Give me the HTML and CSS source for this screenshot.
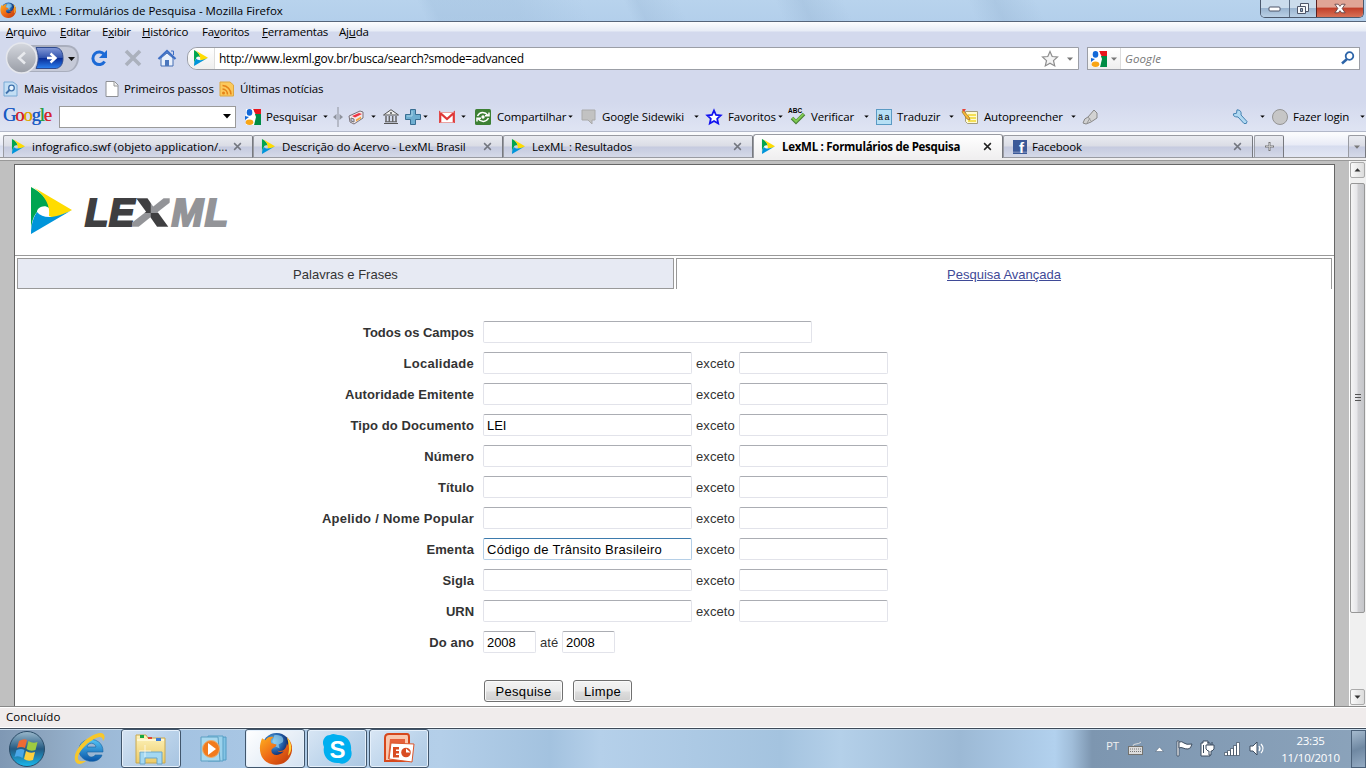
FILE: index.html
```html
<!DOCTYPE html>
<html lang="pt-BR">
<head>
<meta charset="utf-8">
<title>LexML : Formulários de Pesquisa</title>
<link rel="stylesheet" href="styles.css">
</head>
<body>
<svg class="defs" width="0" height="0">
  <defs>
    <linearGradient id="orb" x2="0" y2="1"><stop stop-color="#9bb9cc"/><stop offset=".5" stop-color="#245a82"/><stop offset="1" stop-color="#19b9ee"/></linearGradient>
    <linearGradient id="fwd" x2="0" y2="1"><stop stop-color="#8399d8"/><stop offset=".48" stop-color="#3355ae"/><stop offset=".5" stop-color="#082a94"/><stop offset="1" stop-color="#2b80f0"/></linearGradient>
    <linearGradient id="back" x2="0" y2="1"><stop stop-color="#d5d8df"/><stop offset="1" stop-color="#999da6"/></linearGradient>
    <linearGradient id="folder" x2="0" y2="1"><stop stop-color="#fdf3bd"/><stop offset="1" stop-color="#edcb66"/></linearGradient>
    <radialGradient id="globe" cx=".4" cy=".3"><stop stop-color="#7cc7ee"/><stop offset=".6" stop-color="#2565ae"/><stop offset="1" stop-color="#132d6d"/></radialGradient>
    <linearGradient id="fox" x2="1" y2="1"><stop stop-color="#ffb01f"/><stop offset=".5" stop-color="#ed6716"/><stop offset="1" stop-color="#b8340b"/></linearGradient>
    <linearGradient id="ie" x2="0" y2="1"><stop stop-color="#55c5f5"/><stop offset="1" stop-color="#0754a8"/></linearGradient>
    <symbol id="lex" viewBox="0 0 41 47">
      <path fill="#00a550" d="M0 0C12 6 18 15 18 21C13 17 6 21 6 25C1 31 0 39 0 47Z"/>
      <path fill="#ffdc00" d="M2 0L41 23L27 30C23 31 20 30 18 29C19 23 18 11 2 0Z"/>
      <path fill="#0095da" d="M0 47C0 37 3 29 6 25C12 32 24 32 41 23Z"/>
    </symbol>
    <symbol id="firefox" viewBox="0 0 32 32">
      <circle cx="17" cy="15" r="14" fill="url(#globe)"/>
      <path fill="#9bd6ef" d="M15 3c7-1 10 3 8 7l-4 2 1 4-4-2-3-5z" opacity=".65"/>
      <path fill="url(#fox)" d="M3 6L6 8C8 5 11 4 14 5C11 7 11 9 12 11L17 12C17 15 12 15 12 18C12 23 19 24 24 19C20 20 18 19 18 18C23 20 27 16 27 11L28 13C29 9 28 7 27 5C32 9 34 17 30 24C25 34 10 34 4 26C0 20 0 13 3 6Z"/>
      <path fill="#ffd23b" d="M27 5C32 10 33 18 28 23C30 16 29 11 27 5Z"/>
    </symbol>
    <symbol id="goog" viewBox="0 0 16 16">
      <path fill="#e9161d" d="M8 0h8v6h-5z"/><path fill="#008c45" d="M10 5h6v11H9z"/>
      <path fill="#fff" d="M1 0h7l3 8-2 8H1z"/>
      <ellipse cx="4.500" cy="3.400" rx="2.800" ry="3.300" fill="#1268d8"/><ellipse cx="4.500" cy="13.200" rx="3.800" ry="2.700" fill="#f8a516"/><path fill="#1268d8" d="M0 7l4 1-4 3z"/><path fill="#e9161d" d="M9 0h4l-3 4z"/>
    </symbol>
    <symbol id="x" viewBox="0 0 8 8"><path d="M1 1l6 6M7 1L1 7" fill="none" stroke="currentColor" stroke-width="1.300"/></symbol>
    <symbol id="dn" viewBox="0 0 6 4"><path d="M0 .5h6L3 3.800z" fill="currentColor"/></symbol>
  </defs>
</svg>

<header class="titlebar">
  <svg class="i16"><use href="#firefox"/></svg>
  <span class="wintitle">LexML : Formulários de Pesquisa - Mozilla Firefox</span>
  <div class="winctl">
    <span class="wc"><svg width="14" height="6"><rect x="1" y="1" width="11" height="4" rx="1" fill="#fff" stroke="#4d5568"/></svg></span>
    <span class="wc mid"><svg width="14" height="14"><g fill="#f5f7fa" stroke="#4d5568"><path d="M4.500 1.500h8v8h-8z"/><path d="M1.500 4.500h8v7h-8z"/><path fill="#8ea9c4" d="M4.500 6.500h2v3h-2z"/></g></svg></span>
    <span class="wc close"><svg width="12" height="11" viewBox="0 0 14 12"><path d="M1 1h4l2 2.500L9 1h4L9.500 6 13 11H9L7 8.500 5 11H1l3.500-5z" fill="#fff" stroke="#5d4044"/></svg></span>
  </div>
</header>

<nav class="menu">
  <span><u>A</u>rquivo</span><span><u>E</u>ditar</span><span>E<u>x</u>ibir</span><span><u>H</u>istórico</span><span>Fa<u>v</u>oritos</span><span><u>F</u>erramentas</span><span>Aj<u>u</u>da</span>
</nav>

<div class="navbar">
  <svg class="nb" width="187" height="32" viewBox="0 0 187 32">
    <path d="M14 1H66C75 1 79 7 79 13.500S75 28 66 28H14Z" fill="#a9aebd"/>
    <path d="M14 3H66C74 3 77 8 77 13.500S74 27 66 27H14Z" fill="#c6cad8"/>
    <path d="M36 3.500h19c6 0 8 5 8 11s-3 10-8 10H36c3-7 3-14 0-21z" fill="url(#fwd)" stroke="#2f4a8d"/>
    <circle cx="21.500" cy="14" r="15" fill="url(#back)" stroke="#e5e7ed" stroke-width="1.500"/>
    <path d="M25 8.500l-6 5.500 6 5.500" fill="none" stroke="#e8eaee" stroke-width="2.600"/>
    <path d="M47 14h8M50.500 9.500l5 4.500-5 4.500" fill="none" stroke="#fff" stroke-width="2.400"/>
    <path d="M68 13h7l-3.500 4z" fill="#111"/>
    <path d="M104.300 10.600A6.300 6.300 0 1 0 104.600 17.500" fill="none" stroke="#1c6ad6" stroke-width="3"/><path d="M107 6v8h-8z" fill="#1c6ad6"/>
    <path d="M126 7l14 14M140 7l-14 14" stroke="#abb1bd" stroke-width="3.600"/>
    <path d="M161 14v8h12v-8l-6-5z" fill="#e9f0fb" stroke="#456fb4"/><path d="M158.500 15L167 7l8.500 8" fill="none" stroke="#3e6fc4" stroke-width="2.200"/><path d="M171 7h2.500v4" stroke="#3e6fc4" fill="none"/><path d="M165 16h4v6h-4z" fill="#4c77bd"/>
  </svg>
  <div class="url">
    <span class="ident"><svg width="14" height="16"><use href="#lex"/></svg></span>
    <span class="addr">http://www.lexml.gov.br/busca/search?smode=advanced</span>
    <svg width="18" height="18" viewBox="0 0 18 18"><path d="M9 1.500l2.200 5 5.300.5-4 3.600 1.200 5.300L9 13.200l-4.700 2.700 1.200-5.300-4-3.600 5.300-.5z" fill="#f4f4f4" stroke="#8d8d8d" stroke-width="1.200"/></svg>
    <svg class="dn gray"><use href="#dn"/></svg>
  </div>
  <div class="search">
    <span class="engine"><svg width="16" height="16"><use href="#goog"/></svg><svg class="dn gray"><use href="#dn"/></svg></span>
    <em>Google</em>
    <svg width="14" height="14" viewBox="0 0 14 14"><circle cx="8.500" cy="5" r="3.800" fill="none" stroke="#2c64a8" stroke-width="1.800"/><path d="M6 8l-5 4.500" stroke="#2c64a8" stroke-width="2.500"/></svg>
  </div>
</div>

<div class="bookmarks">
  <svg class="i16" viewBox="0 0 16 16"><path d="M1 1h9l4 3v11H1z" fill="#c3def4" stroke="#79aad5"/><circle cx="8.500" cy="7" r="2.800" fill="#e8f4fd" stroke="#3f71ac" stroke-width="1.300"/><path d="M6.500 9L3 12.500" stroke="#3f71ac" stroke-width="1.800"/></svg><span>Mais visitados</span>
  <svg class="i16" viewBox="0 0 16 16"><path d="M2 .5h8.500L14 4v11.500H2z" fill="#fff" stroke="#8e9095"/><path d="M10 .5V5h4" fill="#eee" stroke="#9a9a9a"/></svg><span>Primeiros passos</span>
  <svg class="i16" viewBox="0 0 16 16"><path d="M1 1h10l3.500 3v11H1z" fill="#fbc95c" stroke="#dda640"/><circle cx="4.500" cy="12" r="1.500" fill="#e58318"/><path d="M3.500 8a5.500 5.500 0 0 1 5 5.500M3.500 4.500a9 9 0 0 1 8.500 9" fill="none" stroke="#e58318" stroke-width="1.600"/></svg><span>Últimas notícias</span>
</div>

<div class="gbar">
  <b class="glogo"><i class="cb">G</i><i class="cr">o</i><i class="cy">o</i><i class="cb">g</i><i class="cg">l</i><i class="cr">e</i></b>
  <div class="combo"><svg width="8" height="5"><path d="M0 0h8L4 4.500z"/></svg></div>
  <svg class="i16"><use href="#goog"/></svg><span>Pesquisar</span><svg class="dn"><use href="#dn"/></svg>
  <svg width="10" height="20" viewBox="0 0 10 20"><path d="M5 0v20" stroke="#8f939d"/><path d="M3.500 7v6L0 10zM6.500 7v6L10 10z" fill="#8f939d"/></svg>
  <svg class="i16" viewBox="0 0 16 16"><path d="M1 7l11-5 3 1v6L6 15l-4-2z" fill="#f3e8e8" stroke="#78717a"/><path d="M4 7l7-3 3 1-7 3.500z" fill="#ee3443"/><path d="M8 10.500l5-3v2l-5 3z" fill="#f6a53b"/><path d="M3 9l3 1v3l-3-1z" fill="#c4c7e6" stroke="#777"/></svg><svg class="dn"><use href="#dn"/></svg>
  <svg class="i16" viewBox="0 0 16 16"><path d="M.5 6L8 .7 15.500 6zM1 14.500h14M2 12.800h12" fill="#eee" stroke="#555"/><path d="M3 7v6M6.300 7v6M9.700 7v6M13 7v6" stroke="#666" stroke-width="1.500"/><circle cx="8" cy="4" r="1" fill="#555"/></svg>
  <svg class="i16" viewBox="0 0 16 16"><path d="M5.500 .5h5v5h5v5h-5v5h-5v-5h-5v-5h5z" fill="#6faed0" stroke="#386e93"/><path d="M7 2v5H2" stroke="#a8d3e7" fill="none"/></svg><svg class="dn"><use href="#dn"/></svg>
  <svg class="i16" viewBox="0 0 16 16"><path d="M0 3h16v11H0z" fill="#fff"/><path d="M1.200 14V4L8 10l6.800-6v10" fill="none" stroke="#df3737" stroke-width="2.200"/><path d="M1 3.500h14M1 13.500h14" stroke="#e38a8a" stroke-width=".8"/></svg><svg class="dn"><use href="#dn"/></svg>
  <svg class="i16" viewBox="0 0 16 16"><rect width="16" height="16" rx="1.500" fill="#3d8034"/><path d="M2.500 7C5 2.500 10 2.500 13 6.500M10 6.800h4V3.500M13.500 9C11 13.500 6 13.500 3 9.500M6 9.200H2v3.300" fill="none" stroke="#fff" stroke-width="1.500"/><circle cx="8" cy="8" r="1.700" fill="#fff"/></svg><span>Compartilhar</span><svg class="dn"><use href="#dn"/></svg>
  <svg class="i16" viewBox="0 0 16 16"><path d="M1 1h13v10h-3v4l-4-4H1z" fill="#c2c2c2" stroke="#aaa"/></svg><span>Google Sidewiki</span><svg class="dn"><use href="#dn"/></svg>
  <svg class="i16" viewBox="0 0 16 16"><path d="M8 1.500l2 4.500 4.700.5-3.500 3.200 1 4.800L8 12l-4.200 2.500 1-4.800L1.300 6.500 6 6z" fill="#fff" stroke="#1111f0" stroke-width="1.800"/></svg><span>Favoritos</span><svg class="dn"><use href="#dn"/></svg>
  <svg class="i16 abc" viewBox="0 0 16 16"><text x="-1" y="4" textLength="14">ABC</text><path d="M3 9l4 4 8-8" fill="none" stroke="#477f35" stroke-width="3.600"/><path d="M3.500 9L7 12.500 14.500 5" fill="none" stroke="#7fca52" stroke-width="2"/></svg><span>Verificar</span><svg class="dn"><use href="#dn"/></svg>
  <svg class="i16 aa" viewBox="0 0 16 16"><rect x=".5" y=".5" width="15" height="15" fill="#b6e0f5" stroke="#5a9ac4"/><text x="2" y="11">ä</text><text x="8.500" y="11">a</text></svg><span>Traduzir</span><svg class="dn"><use href="#dn"/></svg>
  <svg class="i16" viewBox="0 0 16 16"><path d="M3.500 2.500h12v12h-10l-2-2z" fill="#fffbd1" stroke="#a49d7c"/><path d="M6 6h8M6 9h8M6 12h8" stroke="#efd62d" stroke-width="1.700"/><path d="M1 1l6 7 1 3-3-1-5-7z" fill="#f9bb33" stroke="#986c25" stroke-width=".7"/><path d="M0 0h4L2 3z" fill="#e64336"/></svg><span>Autopreencher</span><svg class="dn"><use href="#dn"/></svg>
  <svg class="i16" viewBox="0 0 16 16"><path d="M1 14q1-5 5-6l6-7 3 3v5l-6 4-5 2z" fill="#d2d2d2" stroke="#888"/><path d="M6 8l3 4M5 14l3-5" stroke="#999"/></svg>
  <svg class="i16" viewBox="0 0 16 16"><path d="M5 .8l-.5 3.500-3 .5Q.5 8 6 8l6 6.500q3 1 3-2L9 6Q10 1 5 .8z" fill="#b1d8f1" stroke="#4382b1"/></svg><svg class="dn"><use href="#dn"/></svg>
  <svg class="i16" viewBox="0 0 16 16"><circle cx="8" cy="8" r="7.500" fill="#c6c6c6" stroke="#949494"/></svg><span>Fazer login</span><svg class="dn"><use href="#dn"/></svg>
</div>

<div class="tabs">
  <div class="tab"><svg class="fav"><use href="#lex"/></svg><span class="t1">infografico.swf (objeto application/...</span><svg class="cx"><use href="#x"/></svg></div>
  <div class="tab"><svg class="fav"><use href="#lex"/></svg><span class="t2">Descrição do Acervo - LexML Brasil</span><svg class="cx"><use href="#x"/></svg></div>
  <div class="tab"><svg class="fav"><use href="#lex"/></svg><span class="t3">LexML : Resultados</span><svg class="cx"><use href="#x"/></svg></div>
  <div class="tab active"><svg class="fav"><use href="#lex"/></svg><span class="t4">LexML : Formulários de Pesquisa</span><svg class="cx"><use href="#x"/></svg></div>
  <div class="tab book"><svg class="fav" viewBox="0 0 14 14"><path fill="#3b5998" d="M0 0h14v14H0z"/><path fill="#7185b5" d="M0 11.500h14V13H0z"/><text class="fb" x="6" y="13">f</text></svg><span class="t3">Facebook</span><svg class="cx"><use href="#x"/></svg></div>
  <div class="tab plus"><svg width="9" height="9"><path d="M4.500 0v9M0 4.500h9" stroke="#777" stroke-width="2"/><path d="M4.500 1v7M1 4.500h7" stroke="#ccc" stroke-width=".8"/></svg></div>
  <div class="tab all"><svg class="dn gray"><use href="#dn"/></svg></div>
</div>

<div class="view">
  <main class="page">
    <div class="brand">
      <svg width="41" height="47"><use href="#lex"/></svg>
      <div class="word"><span class="dk">LE</span><span class="xx">X</span><span class="lt">ML</span></div>
    </div>
    <div class="ptabs"><div class="pt">Palavras e Frases</div><div class="pt on"><a>Pesquisa Avançada</a></div></div>
    <form class="form">
      <label class="tight">Todos os Campos</label><div><span class="in w329"></span></div>
      <label class="loose">Localidade</label><div><span class="in w209"></span><span class="ex">exceto</span><span class="in w149"></span></div>
      <label>Autoridade Emitente</label><div><span class="in w209"></span><span class="ex">exceto</span><span class="in w149"></span></div>
      <label>Tipo do Documento</label><div><span class="in w209 lei">LEI</span><span class="ex">exceto</span><span class="in w149"></span></div>
      <label>Número</label><div><span class="in w209"></span><span class="ex">exceto</span><span class="in w149"></span></div>
      <label>Título</label><div><span class="in w209"></span><span class="ex">exceto</span><span class="in w149"></span></div>
      <label class="loose">Apelido / Nome Popular</label><div><span class="in w209"></span><span class="ex">exceto</span><span class="in w149"></span></div>
      <label>Ementa</label><div><span class="in w209 focus">Código de Trânsito Brasileiro</span><span class="ex">exceto</span><span class="in w149"></span></div>
      <label>Sigla</label><div><span class="in w209"></span><span class="ex">exceto</span><span class="in w149"></span></div>
      <label class="tight">URN</label><div><span class="in w209"></span><span class="ex">exceto</span><span class="in w149"></span></div>
      <label>Do ano</label><div><span class="in w53">2008</span><span class="ate">até</span><span class="in w53">2008</span></div>
    </form>
    <div class="btns"><span class="btn b1">Pesquise</span><span class="btn b2">Limpe</span></div>
  </main>
  <div class="sb">
    <div class="sbb"><svg class="dn up"><use href="#dn"/></svg></div>
    <div class="thumb"><svg width="6" height="8"><path d="M0 .5h6M0 3.500h6M0 6.500h6" stroke="#555"/></svg></div>
    <div class="sbb"><svg class="dn"><use href="#dn"/></svg></div>
  </div>
</div>
<div class="status">Concluído</div>

<footer class="taskbar">
  <div class="app start"><svg width="38" height="38" viewBox="0 0 38 38"><circle cx="19" cy="19" r="17.500" fill="url(#orb)" stroke="#2b4c68"/><path d="M11 11q5-3 8-1l-2 8q-4-2-8 0z" fill="#ef6a34"/><path d="M20.500 11q4 3 9 1l-2 8q-5 2-9-1z" fill="#9fcb41"/><path d="M8.500 20q5-2 8 0l-2 8q-4-3-8-1z" fill="#4aa7e8"/><path d="M18 21q4 3 9 1l-2 8q-5 2-9-1z" fill="#fdd03e"/></svg></div>
  <div class="app ie"><svg width="34" height="34" viewBox="0 0 34 34"><path d="M31 20H15C15 26 22 26 23 23H30C27 33 7 31 7 18C7 3 32 4 31 20ZM15 15H24C23 10 16 10 15 15Z" fill="url(#ie)" fill-rule="evenodd" stroke="#17639f" stroke-width=".6"/><path d="M14 29C9 33 4 33 3 28C1 20 12 6 24 2C31 -1 35 3 31 9C31 4 27 4 22 7C12 13 5 22 6 27C7 30 11 29 14 29Z" fill="#f7c72b"/></svg></div>
  <div class="app open"><svg width="34" height="32" viewBox="0 0 34 32"><path d="M2 2h10l2 3h17v25H2z" fill="url(#folder)" stroke="#c9a84e"/><path d="M3 7h27" stroke="#fffbe1" stroke-width="1.500"/><path d="M6 2h4v3H6z" fill="#18a83f"/><path d="M14 4h4v2h-4z" fill="#df4837"/><path d="M22 5h5v3h-5z" fill="#3b7bd7"/><path d="M6 31V19h22v12h-5v-6H11v6z" fill="#a4d8f2" stroke="#6ba5c8"/><path d="M11 12v12M5 18h12" stroke="#fff" opacity=".7"/></svg></div>
  <div class="app"><svg width="32" height="30" viewBox="0 0 32 30"><path d="M14 4l14-1v23H14z" fill="#82c4e5" stroke="#529dc5"/><path d="M10 2h15v25H10z" fill="#9bd2ec" stroke="#58a0c6"/><path d="M3 3h17l2 24H3z" fill="#a9d9ef" stroke="#5d9fc2"/><circle cx="13" cy="15" r="8.500" fill="#f27b1d" stroke="#e7ae72"/><path d="M10 9v12l8-6z" fill="#fff"/></svg></div>
  <div class="app open ff"><svg width="33" height="33"><use href="#firefox"/></svg></div>
  <div class="app open"><svg width="32" height="32" viewBox="0 0 32 32"><path d="M9 2C13 0 15 2 17 2C26 2 31 9 30 17C33 25 25 33 18 30C8 31 1 23 3 14C0 8 4 2 9 2Z" fill="#00aff0"/><text class="sk" x="16.500" y="24.500">S</text></svg></div>
  <div class="app open"><svg width="34" height="32" viewBox="0 0 34 32"><path d="M7 1h18q2 0 2 3v24H3V5q0-4 4-4z" fill="#f9c7ae" stroke="#d6471c" stroke-width="2"/><path d="M8 6h15v20H6z" fill="#e6603a"/><path d="M9 10l23 1-2 18-23-3z" fill="#fff" stroke="#db562c"/><path d="M11 14h6v2.500h-3V18h3v2.500h-3V22h3v2.500h-6z" fill="#d84c22"/><circle cx="24" cy="19.500" r="4.800" fill="#d84c22"/><path d="M24 19.500v-4l4.500 4z" fill="#fff"/></svg></div>
  <div class="tray">
    <span class="pt-lang">PT</span>
    <svg width="16" height="14" viewBox="0 0 16 14"><path d="M5 4q0-2 3-2t5-2" fill="none" stroke="#ddd"/><rect x=".5" y="4.500" width="14" height="8" fill="#ddd" stroke="#74736f"/><path d="M2 7h11M2 9.500h11" stroke="#777" stroke-dasharray="1 1"/></svg>
    <svg width="9" height="6"><path d="M.5 5.500h8L4.500 1z" fill="#fff" stroke="#596b80" stroke-width=".6"/></svg>
    <svg width="17" height="17" viewBox="0 0 17 17"><path d="M1 1h2v15H1z" fill="#fff" stroke="#3d4d60" stroke-width=".8"/><path d="M3 2q3-1 5 1t8 1q-1 5-4 5T7 8 3 8z" fill="#fff" stroke="#3d4d60"/></svg>
    <svg width="15" height="17" viewBox="0 0 15 17"><path d="M1 3h2V1h5v2h2v13H1z" fill="#fff" stroke="#3d4d60"/><path d="M3.500 5v8" stroke="#3d4d60"/><path d="M6 5h8v4l-2 2h-1v4H9v-4H8L6 9zM8 2v3M12 2v3" fill="#fff" stroke="#3d4d60"/></svg>
    <svg width="17" height="14" viewBox="0 0 17 14"><g fill="#fff" stroke="#3d4d60" stroke-width=".7"><path d="M.5 10.500h3v3h-3zM3.500 8.500h3v5h-3zM6.500 6.500h3v7h-3zM9.500 3.500h3v10h-3zM12.500.5h3v13h-3z"/></g></svg>
    <svg width="16" height="15" viewBox="0 0 16 15"><path d="M1 5h3l4-4v13l-4-4H1z" fill="#fff" stroke="#3d4d60"/><path d="M10 5q2 2.500 0 5M12 3q4 4.500 0 9" fill="none" stroke="#fff" stroke-width="1.200"/></svg>
    <div class="clock"><span>23:35</span><span>11/10/2010</span></div>
    <div class="peek"></div>
  </div>
</footer>
</body>
</html>
```
FILE: styles.css
```css
*{box-sizing:border-box}
body{margin:0;width:1366px;height:768px;overflow:hidden;display:flex;flex-direction:column;background:#d3d9ed;color:#000;font:11.5px/16px "Open Sans","Noto Sans",sans-serif;letter-spacing:-.2px;white-space:nowrap}
svg{display:block;flex:none;overflow:visible}
body>*{flex:none}
.defs{position:absolute}
.i16{width:16px;height:16px}
.dn{width:5px;height:3px}
.gray{color:#777;width:6px;height:4px}

.titlebar{height:22px;display:flex;align-items:flex-start;border-bottom:1px solid #56657a;background:linear-gradient(65deg,transparent 0 31%,#9dbcda55 32% 38%,transparent 43% 46%,#94b2d044 47%,transparent 50% 57%,#94b2d055 59%,transparent 62% 71%,#94b2d055 73%,transparent 76%),linear-gradient(#b8d3ed,#b3cfeb);padding-top:2px}
.wintitle{margin:1px auto 0 5px;letter-spacing:-.02px}
.winctl{display:flex;height:18px;margin:-2px 2px 0 0;border:1px solid #4b586c;border-top:0;border-radius:0 0 5px 5px;overflow:hidden}
.wc{width:28px;display:flex;align-items:center;justify-content:center;background:linear-gradient(#cbdcec 45%,#9bb5d0 50%,#b9cfe5)}
.wc.mid{width:27px;border-left:1px solid #5b6c82}
.wc.close{width:47px;border-left:1px solid #5b2020;background:linear-gradient(#e0a596 40%,#c2412c 50%,#d87156)}
.menu{height:22px;display:grid;grid-template-columns:54px 42px 40px 60px 60px 77px 60px;padding:2px 0 0 6px;background:linear-gradient(#fdfdfe,#e7ecf6 9px,#d3d9ed 10px)}
.navbar{height:30px;display:flex;padding-top:3px;align-items:flex-start}
.nb{margin-top:-3px}
.url{width:892px;height:23px;border:1px solid #9b9ea6;border-radius:10px 0 0 10px;background:#fff;display:flex;align-items:center;padding-right:5px;font-size:12px;letter-spacing:-.25px}
.ident{width:27px;height:21px;border-right:1px solid #ddd;background:linear-gradient(#fff,#eee);border-radius:10px 0 0 10px;padding:2px 0 0 6px}
.addr{flex:1;margin-left:4px}
.url .gray{margin-left:8px}
.search{width:273px;height:23px;margin-left:8px;border:1px solid #9b9ea6;background:#fff;display:flex;align-items:center}
.engine{width:33px;height:21px;display:flex;align-items:center;gap:4px;padding-left:3px;border-right:1px solid #ddd;background:linear-gradient(#fff,#eee)}
.search em{flex:1;margin-left:4px;color:#777;letter-spacing:.1px}
.search>svg{margin-right:4px;margin-top:-2px}
.bookmarks{height:28px;display:grid;grid-template-columns:21px 80px 20px 95px 21px 120px;align-items:center;padding:1px 0 0 3px;letter-spacing:-.1px}
.gbar{height:30px;display:grid;grid-template-columns:56px 186px 21px 57px 10px 15px 23px 12px 22px 18px 16px 22px 14px 22px 71px 13px 21px 92px 12px 22px 50px 11px 22px 53px 12px 21px 52px 13px 22px 87px 11px 150px 28px 12px 21px 67px 6px;align-items:center;padding-left:3px;border-bottom:1px solid #b2b8c9;background:linear-gradient(#d3d9ed,#dfe4f3);letter-spacing:-.15px}
.combo{width:177px;height:22px;border:1px solid #9a9a9a;background:#fff;display:flex;align-items:center;justify-content:flex-end;padding-right:4px}
.glogo{font:18.5px/22px "Liberation Serif",serif;letter-spacing:-1.1px;margin-top:-4px}
.glogo i{font-style:normal;text-shadow:.3px 0 currentColor}
.cb{color:#1b5bc4}.cr{color:#d3252f}.cy{color:#dfa900}.cg{color:#2a9e45}
.abc text{font:bold 6.5px "Liberation Sans",sans-serif}
.aa text{font:9px "Liberation Sans",sans-serif}

.tabs{height:29px;display:flex;align-items:flex-start;padding:3px 0 0 3px;background:linear-gradient(#fafbfd 2px,#e8ebf6 13px,#d6dcee 14px,#e3e7f4 25px,#999 25px 26px,#f0eff0 26px 28px,#999 28px)}
.tab{width:250px;height:23px;display:flex;align-items:center;border:1px solid #999ba2;border-right-color:#77797f;border-radius:2px 2px 0 0;padding:0 10px 0 7px;background:linear-gradient(#e9ebf1,#dadce5 10px,#c5cadf 11px,#d5d9e8)}
.tab span{margin-left:6px;flex:1}
.tab.book{padding-left:9px}
.tab.book span{margin-left:5px}
.t1{letter-spacing:.02px}.t2{letter-spacing:-.07px}.t3{letter-spacing:-.15px}.t4{letter-spacing:-.28px}
.fav{width:15px;height:15px}
.book .fav{width:14px;height:14px}
.fb{font:bold 15px "Liberation Sans",sans-serif;fill:#fff}
.cx{width:9px;height:9px;color:#737780}
.tab.active{height:24px;margin-top:-1px;background:linear-gradient(#fff,#f0eff0);font-weight:bold;border-bottom:0;border-radius:3px 3px 0 0}
.active .cx{color:#222}
.tab.plus{width:30px;margin-left:1px;padding:0;justify-content:center}
.tab.all{width:18px;padding:0;justify-content:center;margin-left:auto}

.view{height:546px;display:flex;background:#c0c0c0;padding-left:14px;border-bottom:1px solid #888}
.page{width:1321px;margin-top:3px;height:542px;background:#fff;border:1px solid #666;border-bottom:0;overflow:hidden;color:#333;font:13px/16px "Liberation Sans",Arial,sans-serif;letter-spacing:.1px}
.brand{height:91px;border-bottom:1px solid #999;display:flex;align-items:flex-start;padding:22px 0 0 16px}
.word{display:flex;margin:3px 0 0 13px;font:italic bold 38px/46px "Liberation Sans",Arial,sans-serif;letter-spacing:0;-webkit-text-stroke:2.2px}
.dk{color:#3f3f41;letter-spacing:.8px}
.lt{color:#939498;margin-left:14px;letter-spacing:1.5px}
.xx{transform:scaleX(1.5);transform-origin:left;background:conic-gradient(#939498 90deg,#3f3f41 90deg 180deg,#939498 180deg 270deg,#3f3f41 270deg);-webkit-background-clip:text;background-clip:text;color:transparent;-webkit-text-stroke:1.6px transparent;margin-left:-3px}
.ptabs{display:flex;gap:2px;padding:2px 2px 0;letter-spacing:0}
.pt{width:657px;height:31px;line-height:31px;text-align:center;border:1px solid #999;background:#e7eaf3}
.pt.on{width:656px;background:#fff;border-bottom:0}
.pt a{color:#3f4a97;text-decoration:underline}
.form{display:grid;grid-template-columns:459px 600px;grid-auto-rows:22px;row-gap:9px;column-gap:9px;margin-top:32px;align-items:center}
.form label{text-align:right;font-weight:bold;padding-top:1px}
.tight{letter-spacing:-.05px}.loose{letter-spacing:.25px}
.form div{display:flex;align-items:center}
.in{height:22px;border:1px solid #e2e3ea;border-top-color:#abadb3;border-radius:2px;padding:0 3px;line-height:21px;background:#fff;color:#000;letter-spacing:.28px}
.focus{border-color:#b5cfe7;border-top-color:#3d7bad}
.w329{width:329px}.w209{width:209px}.w149{width:149px}.w53{width:53px;letter-spacing:-.1px}
.lei{letter-spacing:-.1px}
.ex{width:47px;padding:1px 0 0 4px}
.ate{width:26px;padding:1px 0 0 4px}
.btns{display:flex;gap:10px;margin:27px 0 0 469px}
.btn{height:22px;line-height:21px;text-align:center;border:1px solid #707070;border-radius:3px;color:#000;background:linear-gradient(#f3f3f3,#ebebeb 10px,#ddd 11px,#cfcfcf);box-shadow:inset 0 0 0 1px #fafafa;letter-spacing:.3px}
.b1{width:79px}.b2{width:59px}
.sb{width:17px;margin-left:14px;padding:1px 1px 1px 0;background:#f0f0f0;border-left:1px solid #fff;display:flex;flex-direction:column;color:#333}
.sbb{height:16px;display:flex;align-items:center;justify-content:center;border:1px solid #aaa;border-radius:2px;background:linear-gradient(90deg,#fafafa,#dcdcdc)}
.sbb .dn{width:7px;height:4px}
.up{transform:scaleY(-1)}
.thumb{height:430px;margin:5px 0 auto;display:flex;align-items:center;justify-content:center;border:1px solid #979797;border-radius:2px;background:linear-gradient(90deg,#f5f5f5,#e6e6e9 45%,#d0d0d3 55%,#c5c6ca)}
.status{height:21px;background:#f0ecec;padding:1px 6px;border-top:1px solid #fff;border-bottom:1px solid #fff;letter-spacing:.1px}

.taskbar{height:40px;display:flex;border-top:1px solid #3e4a59;box-shadow:inset 0 1px #c9dcec;background:linear-gradient(90deg,#7f98b4,#8ea7c1 50px,#9cb9d6 100px,#a4c3e2 180px,#b4cfe9 440px,#a3c2df 550px,#b5d0ea 600px,#a4c3df 780px,#b4d0e9 840px,#9cb9d5 960px,#b2d1ee 1055px,#a0bdd9 1072px,#7d96b0 1092px,#8ba3bb)}
.app{width:62px;height:39px;display:flex;align-items:center;justify-content:center}
.app.start{width:59px;padding-right:5px}
.app.ie{padding-right:2px}
.app.open{width:60px;margin-right:2px;border:1px solid #41566c;border-radius:3px;background:linear-gradient(135deg,#e3edf8cc,#c5daeebb 50%,#a9c5e0aa);box-shadow:inset 0 0 0 1px #e5f0fb}
.app.ff{background:linear-gradient(135deg,#fff,#d4e2f1)}
.sk{font:bold 24px "Liberation Sans",sans-serif;fill:#fff;text-anchor:middle}
.tray{margin-left:auto;width:260px;display:grid;grid-template-columns:22px 27px 21px 24px 24px 25px 27px 71px 19px;align-items:center;color:#fff}
.pt-lang{color:#eee;margin-top:-5px}
.clock{text-align:center;display:flex;flex-direction:column;line-height:17px;margin-left:-2px;letter-spacing:-.25px}
.peek{width:15px;height:38px;justify-self:end;border:1px solid #4b6179;background:linear-gradient(160deg,#a5bace,#6f88a2 50%,#94abc3)}
```
